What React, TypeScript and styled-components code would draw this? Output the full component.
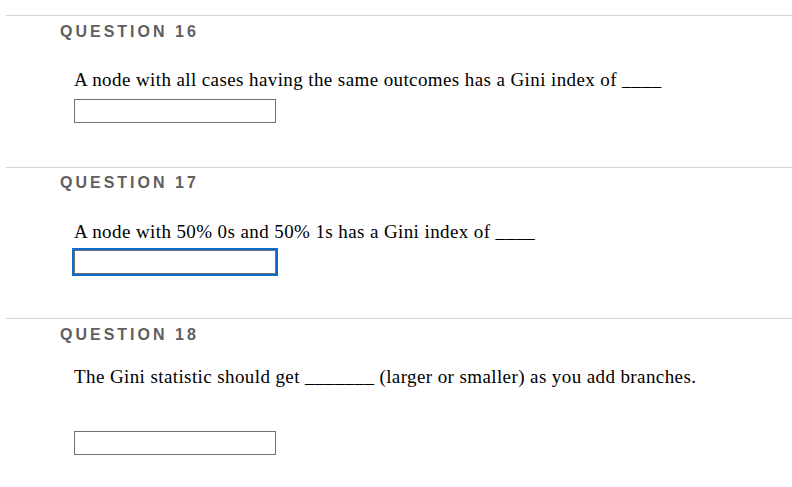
import React from "react";
import styled, { createGlobalStyle } from "styled-components";

const GlobalStyle = createGlobalStyle`
  html, body {
    margin: 0;
    padding: 0;
    background: #ffffff;
  }
  body {
    padding-top: 15px;
  }
`;

const Page = styled.div`
  display: flex;
  flex-direction: column;
  padding-left: 6px;
`;

const Section = styled.section<{ $top: number }>`
  display: flex;
  flex-direction: column;
  align-items: flex-start;
  border-top: 1px solid #d4d4d4;
  padding: ${(p) => p.$top}px 0 44px 0;
`;

const Heading = styled.h3`
  margin: 0 0 0 54px;
  font-family: "Liberation Sans", Arial, sans-serif;
  font-weight: bold;
  font-size: 16px;
  line-height: 20px;
  letter-spacing: 3px;
  color: #5f5f5f;
`;

const QuestionText = styled.p<{ $gap: number }>`
  margin: ${(p) => p.$gap}px 0 0 68px;
  font-family: "Liberation Serif", "Times New Roman", serif;
  font-size: 19px;
  line-height: 22px;
  letter-spacing: 0.4px;
  color: #000000;
`;

const AnswerBox = styled.input<{ $gap: number; $focused?: boolean }>`
  box-sizing: border-box;
  margin: ${(p) => p.$gap}px 0 0 68px;
  width: 202px;
  height: 24px;
  padding: 0 4px;
  border: 1px solid #6f6f6f;
  background: #ffffff;
  outline: ${(p) => (p.$focused ? "2px solid #0f6ccc" : "none")};
  outline-offset: 0;
  font-family: "Liberation Serif", "Times New Roman", serif;
  font-size: 16px;
`;

interface Question {
  number: number;
  text: string;
  top: number;
  textGap: number;
  inputGap: number;
  focused?: boolean;
}

const questions: Question[] = [
  {
    number: 16,
    text: "A node with all cases having the same outcomes has a Gini index of ____",
    top: 6,
    textGap: 27,
    inputGap: 8,
  },
  {
    number: 17,
    text: "A node with 50% 0s and 50% 1s has a Gini index of ____",
    top: 5,
    textGap: 28,
    inputGap: 7,
    focused: true,
  },
  {
    number: 18,
    text: "The Gini statistic should get _______ (larger or smaller) as you add branches.",
    top: 6,
    textGap: 21,
    inputGap: 43,
  },
];

const App: React.FC = () => {
  return (
    <>
      <GlobalStyle />
      <Page>
        {questions.map((q) => (
          <Section key={q.number} $top={q.top}>
            <Heading>QUESTION {q.number}</Heading>
            <QuestionText $gap={q.textGap}>{q.text}</QuestionText>
            <AnswerBox type="text" $gap={q.inputGap} $focused={q.focused} />
          </Section>
        ))}
      </Page>
    </>
  );
};

export default App;
